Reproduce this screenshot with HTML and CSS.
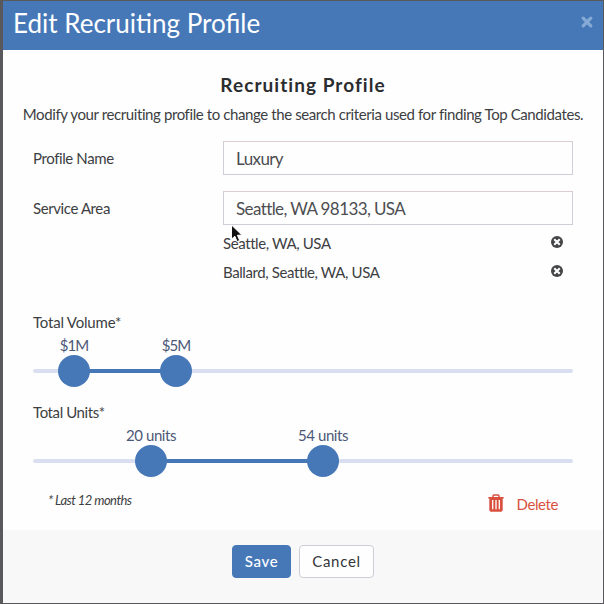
FILE: index.html
```html
<!DOCTYPE html>
<html lang="en">
<head>
    <meta charset="UTF-8">
    <meta name="viewport" content="width=device-width, initial-scale=1.0">
    <title>Edit Recruiting Profile</title>
    <link rel="stylesheet" href="styles.css">
</head>
<body>
    <div class="modal">
        <header class="modal-header">
            <h1>Edit Recruiting Profile</h1>
            <button class="close" aria-label="Close">
                <svg width="12" height="12" viewBox="0 0 12 12"><path d="M2.2 2.2L9.8 9.8M9.8 2.2L2.2 9.8" stroke="currentColor" stroke-width="3.2" stroke-linecap="round"/></svg>
            </button>
        </header>
        <div class="modal-body">
            <h2>Recruiting Profile</h2>
            <p class="intro">Modify your recruiting profile to change the search criteria used for finding Top Candidates.</p>

            <div class="form-row">
                <label for="name">Profile Name</label>
                <input id="name" type="text" value="Luxury">
            </div>
            <div class="form-row">
                <label for="area">Service Area</label>
                <div class="field">
                    <input id="area" type="text" value="Seattle, WA 98133, USA">
                    <svg class="cursor" width="14" height="20" viewBox="0 0 14 20"><path d="M1.5 1V15.2L4.8 12.2L7.1 17.6L9.7 16.5L7.4 11.3L11.8 11Z" fill="#111" stroke="#fff" stroke-width="1"/></svg>
                </div>
            </div>
            <ul class="areas">
                <li>
                    <span>Seattle, WA, USA</span>
                    <svg width="12" height="12" viewBox="0 0 12 12"><circle cx="6" cy="6" r="6" fill="#444547"/><path d="M4 4L8 8M8 4L4 8" stroke="#fff" stroke-width="2.1" stroke-linecap="square"/></svg>
                </li>
                <li>
                    <span>Ballard, Seattle, WA, USA</span>
                    <svg width="12" height="12" viewBox="0 0 12 12"><circle cx="6" cy="6" r="6" fill="#444547"/><path d="M4 4L8 8M8 4L4 8" stroke="#fff" stroke-width="2.1" stroke-linecap="square"/></svg>
                </li>
            </ul>

            <div class="slider">
                <div class="slider-title volume">Total Volume*</div>
                <div class="track">
                    <div class="range" style="left: 41px; width: 102px"></div>
                    <div class="handle" style="left: 41px"><span class="price">$1M</span></div>
                    <div class="handle" style="left: 143px"><span class="price">$5M</span></div>
                </div>
            </div>
            <div class="slider">
                <div class="slider-title">Total Units*</div>
                <div class="track">
                    <div class="range" style="left: 118px; width: 172px"></div>
                    <div class="handle" style="left: 118px"><span>20 units</span></div>
                    <div class="handle" style="left: 290px"><span>54 units</span></div>
                </div>
            </div>

            <div class="notes">
                <em>* Last 12 months</em>
                <a class="delete" href="#">
                    <svg width="16" height="18" viewBox="0 0 16 18">
                        <path d="M5 3.5V2Q5 1 6 1H10Q11 1 11 2V3.5" fill="none" stroke="currentColor" stroke-width="1.5"/>
                        <path d="M0.3 3H15.7V4.6H14.7V16Q14.7 17.8 13 17.8H3Q1.3 17.8 1.3 16V4.6H0.3Z" fill="currentColor"/>
                        <path d="M4.7 6V15.2M8 6V15.2M11.3 6V15.2" stroke="#fff" stroke-width="1.3"/>
                    </svg>
                    <span>Delete</span>
                </a>
            </div>
        </div>
        <footer class="modal-footer">
            <button class="btn btn-save">Save</button>
            <button class="btn btn-cancel">Cancel</button>
        </footer>
    </div>
</body>
</html>
```

FILE: styles.css
```css
* {
    box-sizing: border-box;
}
body {
    margin: 0;
    height: 604px;
    padding: 1px 1px 1px 3px;
    background-color: #59595d;
    color: #3d3e42;
    font-family: Lato, "Liberation Sans", sans-serif;
    font-size: 15px;
    overflow: hidden;
}
.modal {
    display: flex;
    flex-direction: column;
    height: 602px;
    background-color: #fefefe;
    white-space: nowrap;
}
.modal-header {
    display: flex;
    justify-content: space-between;
    height: 49px;
    padding: 0 10px;
    background-color: #4678b8;
    color: #fff;
}
.modal-header h1 {
    margin: 0;
    font-size: 26px;
    font-weight: 400;
    line-height: 44px;
}
.close {
    display: flex;
    height: 12px;
    margin-top: 15px;
    padding: 0;
    border: 0;
    background: none;
    color: #86a9d6;
}
.modal-body {
    flex: 1;
    padding: 21px 30px 0;
    letter-spacing: -0.4px;
}
h2 {
    margin: 0;
    color: #2b2c2f;
    font-size: 19px;
    line-height: 28px;
    text-align: center;
    letter-spacing: 1.05px;
}
.intro {
    margin: 4px -20px 16px;
    line-height: 22px;
    text-align: center;
}
.form-row {
    display: grid;
    grid-template-columns: 190px 350px;
    height: 34px;
    margin-bottom: 16px;
    line-height: 35px;
}
.field {
    position: relative;
}
input {
    display: block;
    width: 350px;
    height: 34px;
    padding: 0 12px;
    border: 1px solid #cfcfd8;
    border-top-color: #dccdd0;
    background-color: #fefefe;
    color: #4c4d50;
    font-family: inherit;
    font-size: 17px;
    letter-spacing: -0.6px;
}
.cursor {
    position: absolute;
    left: 7px;
    top: 33px;
}
.areas {
    margin: -12px 0 0 190px;
    padding: 0;
    list-style: none;
}
.areas li {
    display: flex;
    justify-content: space-between;
    height: 29px;
    padding-right: 10px;
    line-height: 29px;
}
.areas svg {
    margin-top: 7px;
}
.slider {
    height: 90px;
}
.areas + .slider {
    margin-top: 26px;
}
.slider-title {
    height: 57px;
    line-height: 18px;
}
.volume {
    letter-spacing: -0.2px;
}
.track {
    position: relative;
    height: 4px;
    margin-top: -1px;
    border-radius: 2px;
    background-color: #d9dff0;
}
.range {
    position: absolute;
    height: 4px;
    background-color: #4678b8;
}
.handle {
    position: absolute;
    top: -14px;
    display: flex;
    justify-content: center;
    width: 32px;
    height: 32px;
    margin-left: -16px;
    border-radius: 50%;
    background-color: #4678b8;
    color: #4c5877;
}
.handle span {
    margin-top: -19px;
    line-height: 18px;
}
.handle .price {
    letter-spacing: -1px;
}
.notes {
    display: flex;
    justify-content: space-between;
    padding: 0 15px 0 15px;
}
.notes em {
    font-size: 13px;
    line-height: 14px;
    letter-spacing: -0.55px;
}
.delete {
    display: flex;
    gap: 13px;
    color: #d9503f;
    line-height: 22px;
    text-decoration: none;
}
.delete svg {
    margin-top: 1px;
}
.modal-footer {
    display: flex;
    justify-content: center;
    gap: 8px;
    height: 73px;
    padding-top: 15px;
    background-color: #f8f8f8;
}
.btn {
    height: 33px;
    padding: 0 0 2px;
    border: 1px solid #4678b8;
    border-radius: 4px;
    font-family: inherit;
    font-size: 15px;
    letter-spacing: 0.7px;
}
.btn-save {
    width: 59px;
    background-color: #4678b8;
    color: #fff;
    font-weight: 500;
}
.btn-cancel {
    width: 75px;
    border-color: #cccdd5;
    background-color: #fefefe;
    color: #33353a;
}
```
